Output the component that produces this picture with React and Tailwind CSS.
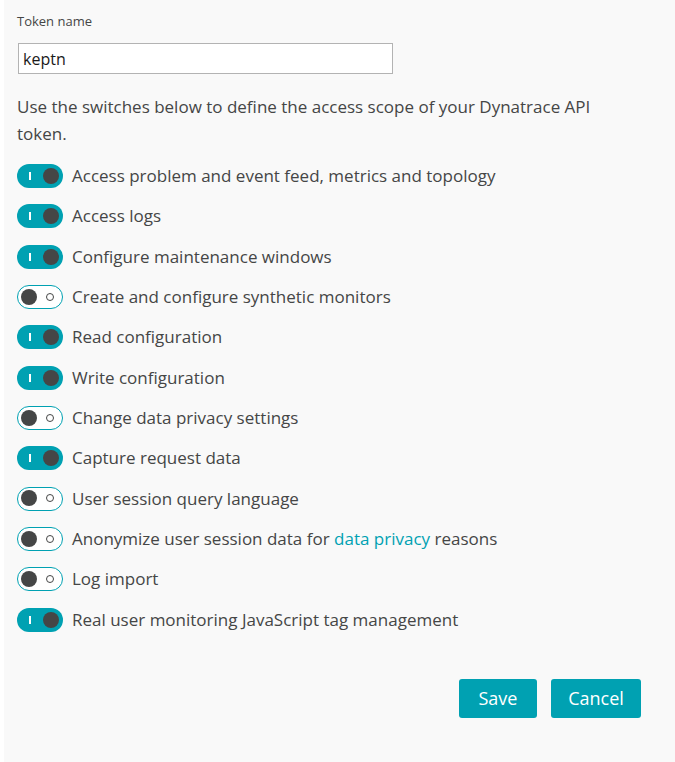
import React, { useState } from 'react'

const scopes = [
  { label: 'Access problem and event feed, metrics and topology', on: true },
  { label: 'Access logs', on: true },
  { label: 'Configure maintenance windows', on: true },
  { label: 'Create and configure synthetic monitors', on: false },
  { label: 'Read configuration', on: true },
  { label: 'Write configuration', on: true },
  { label: 'Change data privacy settings', on: false },
  { label: 'Capture request data', on: true },
  { label: 'User session query language', on: false },
  { label: 'anonymize', on: false },
  { label: 'Log import', on: false },
  { label: 'Real user monitoring JavaScript tag management', on: true },
]

const Switch = ({ on, onClick }) => {
  if (on) {
    return (
      <button onClick={onClick} className="relative w-[46px] h-[24px] rounded-full bg-[#00a1b2] flex-shrink-0">
        <span className="absolute left-[12px] top-[8px] w-[1.5px] h-[8px] bg-white"></span>
        <span className="absolute right-[4px] top-[4px] w-[16px] h-[16px] rounded-full bg-[#454646]"></span>
      </button>
    )
  }
  return (
    <button onClick={onClick} className="relative w-[46px] h-[24px] rounded-full bg-white border-[1.5px] border-[#00a1b2] flex-shrink-0">
      <span className="absolute left-[2.5px] top-[2.5px] w-[16px] h-[16px] rounded-full bg-[#454646]"></span>
      <span className="absolute right-[8px] top-[6.5px] w-[8px] h-[8px] rounded-full border-[1.5px] border-[#454646]"></span>
    </button>
  )
}

export default function App() {
  const [items, setItems] = useState(scopes)
  const toggle = (i) => setItems(items.map((s, j) => (j === i ? { ...s, on: !s.on } : s)))

  return (
    <div className="min-h-[762px] bg-white pl-[4px] font-['Open_Sans',sans-serif] text-[#454646]">
      <div className="min-h-[762px] bg-[#f9f9f9] pl-[13px] pr-[34px] pt-[12px]">
        <label className="block text-[13px] leading-[18px]">Token name</label>
        <input
          defaultValue="keptn"
          className="mt-[13px] block w-[375px] h-[31px] ml-[1px] border border-[#b3b3b3] bg-white px-[4px] text-[16px] text-[#1a1a1a] outline-none"
        />
        <p className="mt-[19px] text-[17px] leading-[27px] max-w-[595px]">
          Use the switches below to define the access scope of your Dynatrace API token.
        </p>
        <div className="mt-[17px] flex flex-col gap-[16.35px]">
          {items.map((s, i) => (
            <div key={i} className="flex items-center gap-[9px] h-[24px]">
              <Switch on={s.on} onClick={() => toggle(i)} />
              <span className="text-[17px] leading-[24px]">
                {s.label === 'anonymize' ? (
                  <>
                    Anonymize user session data for <a className="text-[#00a1b2]" href="#">data privacy</a> reasons
                  </>
                ) : (
                  s.label
                )}
              </span>
            </div>
          ))}
        </div>
        <div className="mt-[47px] flex justify-end gap-[14px]">
          <button className="w-[78px] h-[39px] rounded-[3px] bg-[#00a1b2] text-white text-[18px]">Save</button>
          <button className="w-[90px] h-[39px] rounded-[3px] bg-[#00a1b2] text-white text-[18px]">Cancel</button>
        </div>
      </div>
    </div>
  )
}
